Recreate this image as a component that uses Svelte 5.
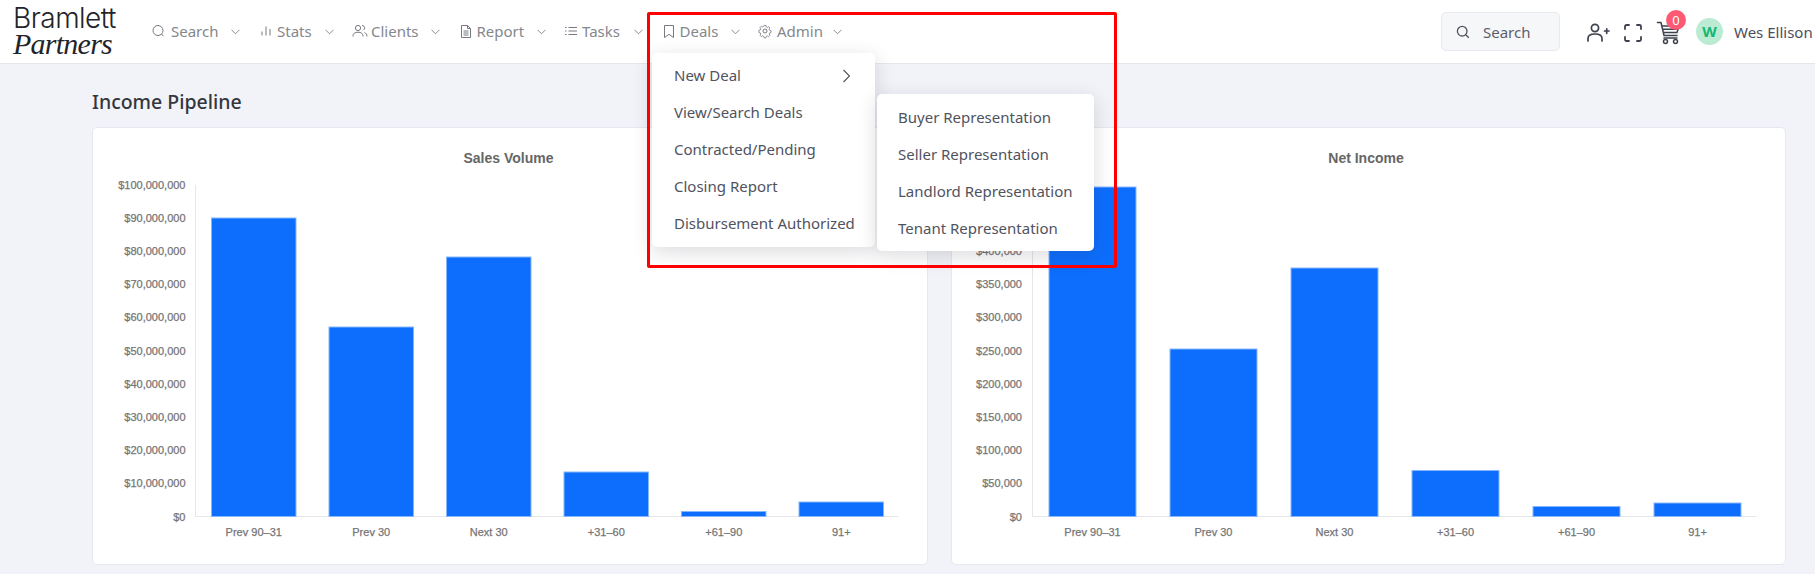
<script>
  const navItems = [
    { label: 'Search', icon: 'search', w: 49, gap: 5 },
    { label: 'Stats', icon: 'stats', w: 37, gap: 3.5 },
    { label: 'Clients', icon: 'clients', w: 49, gap: 3.5 },
    { label: 'Report', icon: 'report', w: 49, gap: 3 },
    { label: 'Tasks', icon: 'tasks', w: 41, gap: 3 },
    { label: 'Deals', icon: 'deals', w: 40, gap: 3 },
    { label: 'Admin', icon: 'admin', w: 45, gap: 4 }
  ];
  const dealItems = ['View/Search Deals', 'Contracted/Pending', 'Closing Report', 'Disbursement Authorized'];
  const subItems = ['Buyer Representation', 'Seller Representation', 'Landlord Representation', 'Tenant Representation'];
  const cats = ['Prev 90–31', 'Prev 30', 'Next 30', '+31–60', '+61–90', '91+'];

  const left = {
    title: 'Sales Volume', cx: 415.5, axis: 102, right: 807, labelX: 92.5, barW: 84.5,
    ticks: ['$0', '$10,000,000', '$20,000,000', '$30,000,000', '$40,000,000', '$50,000,000', '$60,000,000', '$70,000,000', '$80,000,000', '$90,000,000', '$100,000,000'],
    tops: [218, 327, 257, 472, 511.5, 502]
  };
  const right = {
    title: 'Net Income', cx: 414, axis: 80, right: 806, labelX: 70, barW: 87,
    ticks: ['$0', '$50,000', '$100,000', '$150,000', '$200,000', '$250,000', '$300,000', '$350,000', '$400,000', '$450,000', '$500,000'],
    tops: [187, 349, 268, 470.5, 506.5, 503]
  };
  const charts = [left, right];
  const Y0 = 516.5;
  const CARD_TOP = 128;
  function slot(c) { return (c.right - c.axis) / 6; }
</script>

{#snippet navIcon(name)}
  <svg class="ico" width="16" height="16" viewBox="0 0 16 16" fill="none" stroke="#77797f" stroke-width="1">
    {#if name === 'search'}
      <circle cx="8" cy="7.500" r="5" /><path d="M11.500 11l2 2.200" />
    {:else if name === 'stats'}
      <path d="M4 12.500V8.500M8 12.500V3.500M12 12.500V6" />
    {:else if name === 'clients'}
      <circle cx="6" cy="5" r="2.600" /><path d="M1 13.500v-.8c0-2.200 2-3.500 5-3.500s5 1.300 5 3.500v.8M10 2.500a2.500 2.500 0 0 1 1.500 4.600M12.500 9.500c1.500.6 2.500 1.800 2.500 4" />
    {:else if name === 'report'}
      <path d="M3.500 2.500h6l3 3v9h-9zM9.500 2.500v3h3M5.500 8h5M5.500 10h5M5.500 12h5" />
    {:else if name === 'tasks'}
      <path d="M5.500 4.500h8.500M5.500 8h8.500M5.500 11.500h8.500M2 4.500h1.500M2 8h1.500M2 11.500h1.500" />
    {:else if name === 'deals'}
      <path d="M3.500 2.500h9v12L8 11.300l-4.500 3.200z" />
    {:else if name === 'admin'}
      <circle cx="8" cy="8" r="2" /><path d="M6.800 1.300h2.400l.4 1.900 1.300.6 1.700-1 1.600 1.700-1 1.600.5 1.300 1.900.5v2.300l-1.900.5-.5 1.300 1 1.600-1.600 1.700-1.700-1-1.300.6-.4 1.900H6.800l-.4-1.900-1.300-.6-1.700 1-1.600-1.700 1-1.600-.5-1.300-1.900-.5V7.300l1.900-.5.5-1.300-1-1.600 1.600-1.700 1.700 1 1.300-.6z" transform="translate(1.600 1.400) scale(.8)" />
    {/if}
  </svg>
{/snippet}

<div class="page">
  <header class="topbar">
    <div class="logo">
      <span class="logo-a">Bramlett</span>
      <span class="logo-b">Partners</span>
    </div>

    <nav class="nav">
      {#each navItems as item}
        <div class="nav-item">
          <span class="nav-ico" style="margin-right:{item.gap}px">{@render navIcon(item.icon)}</span>
          <span class="nav-label" style="width:{item.w}px">{item.label}</span>
          <svg class="chev" width="9" height="6" viewBox="0 0 9 6" fill="none" stroke="#8b8d93" stroke-width="1"><path d="M.5 .8l4 4 4-4" /></svg>
        </div>
      {/each}
    </nav>

    <div class="tools">
      <div class="search">
        <svg width="14" height="14" viewBox="0 0 14 14" fill="none" stroke="#50535e" stroke-width="1.300"><circle cx="6.200" cy="6.200" r="4.800" /><path d="M9.800 9.800l3 3" /></svg>
        <span>Search</span>
      </div>
      <svg class="t1" width="24" height="20" viewBox="0 0 24 20" fill="none" stroke="#3f424e" stroke-width="1.700" stroke-linecap="round">
        <circle cx="9" cy="5" r="3.600" /><path d="M2 18v-2.500c0-3 2.500-4.500 7-4.500s7 1.500 7 4.500V18M18.500 8h4.500M20.700 5.800v4.500" />
      </svg>
      <svg class="t2" width="18" height="18" viewBox="0 0 18 18" fill="none" stroke="#3f424e" stroke-width="1.800" stroke-linecap="round">
        <path d="M1 5V2.500A1.500 1.500 0 0 1 2.500 1H5M13 1h2.500A1.500 1.500 0 0 1 17 2.500V5M17 13v2.500a1.500 1.500 0 0 1-1.500 1.500H13M5 17H2.500A1.500 1.500 0 0 1 1 15.500V13" />
      </svg>
      <div class="cart">
        <svg width="24" height="24" viewBox="0 0 24 24" fill="none" stroke="#3f424e" stroke-width="1.500" stroke-linecap="round" stroke-linejoin="round">
          <path d="M1.500 1.500h3.500l3 13h13M5.800 5H23l-2 6.500H7.300M6.700 8.300h15" /><path d="M8 17h13" /><circle cx="9.500" cy="20.500" r="2" /><circle cx="19.500" cy="20.500" r="2" />
        </svg>
        <span class="badge">0</span>
      </div>
      <div class="avatar">W</div>
      <span class="user">Wes Ellison</span>
    </div>
  </header>

  <main class="main">
    <h1>Income Pipeline</h1>
    <div class="cards">
      {#each charts as c}
        <section class="card">
          <svg class="chart" width="100%" height="100%">
            <text class="ctitle" x={c.cx} y="35" text-anchor="middle">{c.title}</text>
            {#each c.ticks as t, i}
              <text class="tick" x={c.labelX} y={Y0 - CARD_TOP - i * 33.2 + 4} text-anchor="end">{t}</text>
            {/each}
            <path class="ax" d="M{c.axis + .5} 57V{Y0 - CARD_TOP}H{c.right - 2}" />
            {#each c.tops as top, i}
              {@const cx = c.axis + slot(c) * (i + .5)}
              <rect class="bar" x={cx - c.barW / 2} y={top - CARD_TOP} width={c.barW} height={Y0 - top} />
              <text class="tick" x={cx} y={Y0 - CARD_TOP + 19} text-anchor="middle">{cats[i]}</text>
            {/each}
          </svg>
        </section>
      {/each}
    </div>
  </main>

  <div class="menu deals">
    <div class="mi first"><span>New Deal</span>
      <svg width="9" height="14" viewBox="0 0 9 14" fill="none" stroke="#50535e" stroke-width="1.100"><path d="M1.500 1l6 6-6 6" /></svg>
    </div>
    {#each dealItems as d}<div class="mi">{d}</div>{/each}
  </div>
  <div class="menu sub">
    {#each subItems as s}<div class="mi">{s}</div>{/each}
  </div>
  <div class="redbox"></div>
</div>

<style>
  :global(body) {
    margin: 0;
    background: #f2f3f8;
    overflow: hidden;
  }
  .page {
    position: relative;
    width: 1815px;
    height: 574px;
    overflow: hidden;
    font-family: "Noto Sans", "Open Sans", sans-serif;
    font-size: 15px;
    color: #4c4f5b;
  }
  .topbar {
    display: flex;
    align-items: center;
    height: 63px;
    background: #fff;
    border-bottom: 1px solid #e6e7ec;
    box-sizing: content-box;
  }
  .logo {
    display: flex;
    flex-direction: column;
    box-sizing: border-box;
    width: 150px;
    padding-left: 13px;
    color: #23242a;
    margin-top: -1px;
  }
  .logo-a {
    font-family: "Inter", sans-serif;
    font-weight: 300;
    font-size: 28px;
    letter-spacing: -.5px;
    line-height: 25px;
  }
  .logo-b {
    font-family: "Liberation Serif", serif;
    font-style: italic;
    font-size: 30px;
    letter-spacing: -.75px;
    line-height: 25px;
  }
  .nav {
    display: flex;
    gap: 17.500px;
    height: 100%;
    align-items: center;
  }
  .nav-item {
    display: flex;
    align-items: center;
    color: #85878c;
    white-space: nowrap;
    margin-top: -2px;
  }
  .nav-ico { display: flex; }
  .nav-label { display: block; margin-right: 11px; }
  .chev { margin-top: 3px; }
  .tools {
    display: flex;
    align-items: center;
    margin-left: auto;
  }
  .search {
    display: flex;
    align-items: center;
    gap: 13px;
    box-sizing: border-box;
    width: 119px;
    height: 39px;
    padding-left: 14px;
    background: #f6f7f9;
    border: 1px solid #e9eaef;
    border-radius: 5px;
    color: #5d606b;
    margin-right: 26px;
  }
  .t1 { margin-right: 14px; margin-top: 2px; }
  .t2 { margin-right: 14px; margin-top: 2px; }
  .cart { position: relative; display: flex; margin-right: 16px; margin-top: 2px; }
  .badge {
    position: absolute;
    left: 10px;
    top: -11px;
    width: 20px;
    height: 20px;
    border-radius: 50%;
    background: #fb5a72;
    color: #fff;
    font-size: 13px;
    line-height: 20px;
    text-align: center;
  }
  .avatar {
    width: 27px;
    height: 27px;
    border-radius: 50%;
    background: #bcebd4;
    color: #16b673;
    font-weight: 700;
    font-size: 15px;
    line-height: 27px;
    text-align: center;
    margin-right: 11px;
  }
  .user { white-space: nowrap; color: #4c4f5b; width: 81px; }
  .main {
    padding: 0 29px 0 92px;
  }
  h1 {
    margin: 0;
    height: 63px;
    line-height: 76px;
    font-size: 19.500px;
    font-weight: 500;
    color: #34363e;
  }
  .cards {
    display: grid;
    grid-template-columns: 1fr 1fr;
    gap: 23px;
  }
  .card {
    height: 438px;
    box-sizing: border-box;
    background: #fff;
    border: 1px solid #e5e8f1;
    border-radius: 5px;
  }
  .chart { display: block; }
  .ctitle {
    font: bold 14px "Liberation Sans", sans-serif;
    fill: #666;
  }
  .tick {
    font: 11px "Liberation Sans", sans-serif;
    fill: #757575;
    stroke: #757575;
    stroke-width: .25px;
  }
  .ax { fill: none; stroke: #e6e6ea; stroke-width: 1; }
  .bar { fill: #0d6efd; stroke: #86b7fe; stroke-width: 1; }
  .menu {
    position: absolute;
    box-sizing: border-box;
    background: #fff;
    border-radius: 5px;
    box-shadow: 0 5px 20px rgba(30, 32, 50, .16);
    white-space: nowrap;
  }
  .deals {
    left: 652px;
    top: 53px;
    width: 223px;
    height: 194px;
    padding: 4px 22px;
  }
  .sub {
    left: 877px;
    top: 94px;
    width: 217px;
    height: 157px;
    padding: 5px 21px;
  }
  .mi {
    height: 37px;
    line-height: 37px;
    color: #50535e;
  }
  .first {
    display: flex;
    align-items: center;
    justify-content: space-between;
    padding-right: 2px;
  }
  .redbox {
    position: absolute;
    left: 647px;
    top: 12px;
    width: 470px;
    height: 256px;
    box-sizing: border-box;
    border: 3px solid #f00;
    border-radius: 2px;
    pointer-events: none;
  }
</style>
